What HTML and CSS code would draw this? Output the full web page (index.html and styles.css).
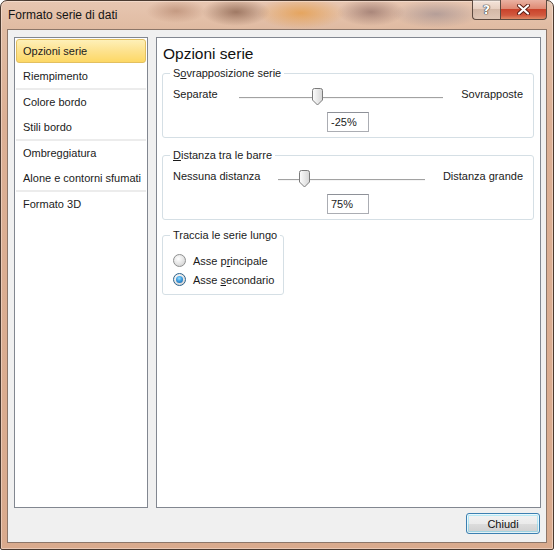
FILE: index.html
```html
<!DOCTYPE html>
<html lang="it">
<head>
<meta charset="utf-8">
<title>Formato serie di dati</title>
<link rel="stylesheet" href="styles.css">
</head>
<body>
<div class="window">
  <div class="titlebar">
    <div class="title">Formato serie di dati</div>
    <div class="caption-buttons">
      <div class="cbtn help"><span>?</span></div>
      <div class="cbtn close">
        <svg width="15" height="11" viewBox="0 0 15 11"><path d="M3 1.5 L12 9.5 M12 1.5 L3 9.5" stroke="#5a1c12" stroke-width="4" stroke-linecap="round"/><path d="M3 1.5 L12 9.5 M12 1.5 L3 9.5" stroke="#fff" stroke-width="2.2" stroke-linecap="round"/></svg>
      </div>
    </div>
  </div>
  <div class="client">
    <div class="panes">
      <ul class="nav">
        <li class="item active">Opzioni serie</li>
        <li class="item group-end">Riempimento</li>
        <li class="item">Colore bordo</li>
        <li class="item group-end">Stili bordo</li>
        <li class="item">Ombreggiatura</li>
        <li class="item group-end">Alone e contorni sfumati</li>
        <li class="item">Formato 3D</li>
      </ul>
      <div class="main">
        <h1 class="heading">Opzioni serie</h1>
        <fieldset class="group wide">
          <legend>S<u>o</u>vrapposizione serie</legend>
          <div class="slider-row">
            <span class="lbl">Separate</span>
            <div class="track gap1"><div class="thumb" style="left: calc(38.4% - 5px)"><svg width="11" height="18" viewBox="0 0 11 18"><defs><linearGradient id="tg1" x1="0" y1="0" x2="1" y2="0"><stop offset="0" stop-color="#fdfdfd"/><stop offset="1" stop-color="#d6d6d6"/></linearGradient></defs><path d="M0.5 2.5 Q0.5 0.5 2.5 0.5 H8.5 Q10.5 0.5 10.5 2.5 V12 L5.5 17 L0.5 12 Z" fill="url(#tg1)" stroke="#7b7b7b"/></svg></div></div>
            <span class="lbl">Sovrapposte</span>
          </div>
          <div class="box-row"><div class="textbox">-25%</div></div>
        </fieldset>
        <fieldset class="group wide second">
          <legend><u>D</u>istanza tra le barre</legend>
          <div class="slider-row">
            <span class="lbl">Nessuna distanza</span>
            <div class="track"><div class="thumb" style="left: calc(17.4% - 5px)"><svg width="11" height="18" viewBox="0 0 11 18"><defs><linearGradient id="tg2" x1="0" y1="0" x2="1" y2="0"><stop offset="0" stop-color="#fdfdfd"/><stop offset="1" stop-color="#d6d6d6"/></linearGradient></defs><path d="M0.5 2.5 Q0.5 0.5 2.5 0.5 H8.5 Q10.5 0.5 10.5 2.5 V12 L5.5 17 L0.5 12 Z" fill="url(#tg2)" stroke="#7b7b7b"/></svg></div></div>
            <span class="lbl">Distanza grande</span>
          </div>
          <div class="box-row"><div class="textbox">75%</div></div>
        </fieldset>
        <fieldset class="group narrow">
          <legend>Traccia le serie lungo</legend>
          <label class="radio-row"><span class="radio"></span><span class="rlbl">Asse p<u>r</u>incipale</span></label>
          <label class="radio-row"><span class="radio checked"></span><span class="rlbl">Asse <u>s</u>econdario</span></label>
        </fieldset>
      </div>
    </div>
    <div class="footer">
      <button class="btn">Chiudi</button>
    </div>
  </div>
</div>
</body>
</html>
```

FILE: styles.css
```css
* { box-sizing: border-box; }
html, body { margin: 0; padding: 0; }
body {
  width: 554px;
  height: 550px;
  background: #ffffff;
  font-family: "Liberation Sans", Arial, sans-serif;
  font-size: 11px;
  color: #1b1b1b;
}
.window {
  width: 554px;
  height: 550px;
  border: 1px solid #4b3a30;
  border-radius: 7px 7px 2px 2px;
  display: flex;
  flex-direction: column;
  background:
    radial-gradient(ellipse 34px 14px at 235px 11px, rgba(130,90,70,0.7), rgba(130,90,70,0) 100%),
    radial-gradient(ellipse 30px 12px at 175px 10px, rgba(165,115,90,0.5), rgba(165,115,90,0) 100%),
    radial-gradient(ellipse 44px 16px at 300px 12px, rgba(230,150,55,0.65), rgba(230,150,55,0) 100%),
    radial-gradient(ellipse 34px 14px at 370px 11px, rgba(130,95,90,0.6), rgba(130,95,90,0) 100%),
    radial-gradient(ellipse 44px 14px at 435px 13px, rgba(150,135,140,0.6), rgba(150,135,140,0) 100%),
    linear-gradient(180deg, #e7c6b1 0px, #e0bba2 28px, #dcb095 120px, #d9aa8d 550px);
  box-shadow: inset 0 0 0 1px rgba(255,240,230,0.45);
}
.titlebar {
  height: 28px;
  display: flex;
  justify-content: space-between;
  align-items: flex-start;
  padding-left: 7px;
}
.title {
  font-size: 12px;
  line-height: 12px;
  padding-top: 8px;
  color: #141414;
}
.caption-buttons {
  display: flex;
  margin-right: 6px;
  margin-top: -1px;
}
.cbtn {
  height: 20px;
  display: flex;
  align-items: center;
  justify-content: center;
  border: 1px solid #5d4a40;
  border-top: none;
}
.help {
  width: 28px;
  border-radius: 0 0 0 4px;
  border-right: none;
  background: linear-gradient(180deg, rgba(255,255,255,0.55) 0, rgba(235,225,220,0.45) 45%, rgba(190,170,160,0.45) 50%, rgba(220,205,195,0.5) 100%);
}
.help span {
  font-family: "DejaVu Sans", sans-serif;
  font-weight: bold;
  font-size: 13px;
  color: #fff;
  text-shadow: 0 0 1px #333, 0 0 1px #333, 0 0 1px #333;
}
.close {
  width: 47px;
  border-radius: 0 0 4px 0;
  background: linear-gradient(180deg, #eab2a2 0, #df8a74 45%, #c9432b 50%, #d1583e 80%, #e08a65 100%);
}
.client {
  flex: 1;
  margin: 0 6px 6px 6px;
  border: 1px solid #8c7669;
  background: #f0f0f0;
  display: flex;
  flex-direction: column;
  padding: 7px 5px 0 6px;
}
.panes {
  display: flex;
  gap: 8px;
  height: 471px;
}
.nav {
  list-style: none;
  margin: 0;
  padding: 1px;
  width: 134px;
  background: #fff;
  border: 1px solid #828790;
}
.item {
  height: 25px;
  line-height: 25px;
  padding-left: 7px;
  white-space: nowrap;
}
.item.group-end {
  border-bottom: 2px solid #ececec;
  height: 26px;
}
.item.active {
  height: 24px;
  line-height: 22px;
  padding-left: 6px;
  margin-bottom: 1px;
  border: 1px solid #e3c060;
  border-radius: 3px;
  background: linear-gradient(180deg, #fef0b8 0, #fde28e 50%, #fdd865 100%);
}
.main {
  flex: 1;
  background: #fff;
  border: 1px solid #828790;
  padding: 0 6px 0 5px;
}
.heading {
  margin: 6px 0 3px 1px;
  font-size: 15.5px;
  line-height: 20px;
  font-weight: normal;
  color: #111;
}
.group {
  margin: 0;
  padding: 0 10px 5px 10px;
  border: 1px solid #d5dfe5;
  border-radius: 3px;
  min-width: 0;
}
.group legend {
  padding: 0 3px;
  margin-left: -3px;
  line-height: 13px;
  white-space: nowrap;
}
.group.second { margin-top: 11px; }
.group.narrow {
  margin-top: 9px;
  width: 122px;
  padding-top: 9px;
  padding-bottom: 5px;
}
.slider-row {
  display: flex;
  align-items: flex-start;
  height: 17px;
  margin-top: 8px;
}
.lbl {
  line-height: 13px;
  white-space: nowrap;
}
.track {
  flex: 1;
  position: relative;
  margin: 9px 18px 0 18px;
  height: 2px;
  border-top: 1px solid #a2a2a2;
  border-bottom: 1px solid #f4f4f4;
}
.track.gap1 { margin-left: 21px; }
.thumb {
  position: absolute;
  top: -10px;
  width: 11px;
  height: 18px;
}
.thumb svg { display: block; }
.box-row {
  display: flex;
  justify-content: center;
  margin-top: 7px;
}
.textbox {
  width: 42px;
  height: 20px;
  border: 1px solid #abadb3;
  border-top-color: #8e9198;
  background: #fff;
  line-height: 18px;
  padding-left: 3px;
}
.radio-row {
  display: flex;
  align-items: center;
  height: 19px;
  gap: 7px;
  white-space: nowrap;
}
.radio {
  width: 13px;
  height: 13px;
  border-radius: 50%;
  border: 1px solid #8e8f8f;
  background: radial-gradient(circle at 40% 35%, #ffffff 0, #e8e8e8 45%, #c9c9c9 100%);
  position: relative;
  flex: none;
}
.radio.checked {
  border-color: #2c628b;
}
.radio.checked::after {
  content: "";
  position: absolute;
  left: 2px;
  top: 2px;
  width: 7px;
  height: 7px;
  border-radius: 50%;
  background: radial-gradient(circle at 45% 35%, #9be0ff 0, #3d9de0 45%, #0e5a9e 100%);
}
.footer {
  display: flex;
  justify-content: flex-end;
  padding: 5px 1px 0 0;
}
.btn {
  width: 74px;
  height: 21px;
  font-family: inherit;
  font-size: 11px;
  color: #111;
  border: 1px solid #3c7fb1;
  border-radius: 3px;
  background: linear-gradient(180deg, #f3f3f3 0, #ebebeb 50%, #dddddd 51%, #cfcfcf 100%);
  box-shadow: inset 0 0 0 1px rgba(255,255,255,0.7), inset 0 0 0 2px rgba(72,216,251,0.35);
  padding: 0;
}
```
